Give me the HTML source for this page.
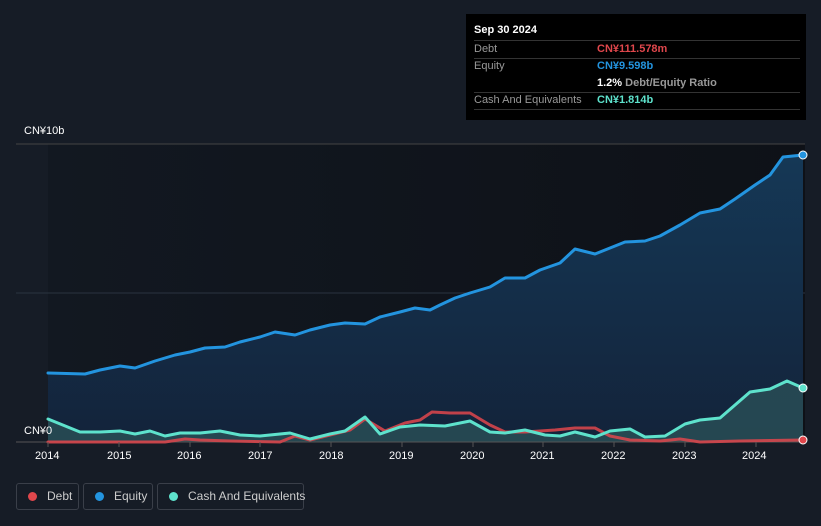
<!DOCTYPE html><html style="height:526px;overflow:hidden"><head><style>
body{margin:0;width:821px;height:526px;background:#161c26;font-family:"Liberation Sans",sans-serif;overflow:hidden;position:relative}
.t{position:absolute;color:#fff;font-size:11px}
.tip{position:absolute;left:466px;top:14px;width:340px;height:106px;background:#000;font-size:11px}
.row{position:absolute;left:8px;width:326px;height:17px;border-bottom:1px solid #333;color:#999}
.row span{position:absolute;left:123px}
.leg{position:absolute;top:483px;height:27px;border:1px solid #3a3f49;border-radius:3px;color:#ccc;font-size:12px;line-height:25px;box-sizing:border-box;white-space:nowrap}
.leg i{display:inline-block;width:9px;height:9px;border-radius:50%;margin:0 10px 0 11px;vertical-align:-1px}
</style></head><body>
<svg width="821" height="526" style="position:absolute;left:0;top:0">
<defs><linearGradient id="g" x1="0" y1="0" x2="0" y2="1"><stop offset="0" stop-color="#153856"/><stop offset="1" stop-color="#13233a"/></linearGradient>
<linearGradient id="bg" x1="0" y1="0" x2="1" y2="0"><stop offset="0" stop-color="#121821"/><stop offset="1" stop-color="#0e1117"/></linearGradient></defs>
<rect x="48" y="144" width="757" height="298" fill="url(#bg)"/>
<line x1="16" y1="144" x2="805" y2="144" stroke="#444"/>
<line x1="16" y1="293" x2="805" y2="293" stroke="#2a3340"/>
<path d="M48,373 L85,374 100,370 120,366 135,368 155,361 175,355 190,352 205,348 225,347 240,342 260,337 275,332 295,335 310,330 330,325 345,323 365,324 380,317 400,312 415,308 430,310 440,305 455,298 470,293 490,287 505,278 525,278 540,270 560,263 575,249 595,254 610,248 625,242 645,241 660,236 680,225 700,213 720,209 735,199 755,185 770,175 783,157 803,155 L803,442 48,442Z" fill="url(#g)"/>
<path d="M48,419 L80,432 100,432 120,431 135,434 150,431 165,436 180,433 200,433 220,431 240,435 260,436 290,433 310,439 330,434 345,431 365,417 380,434 400,427 420,425 445,426 470,421 490,432 505,433 525,430 545,435 560,436 575,432 595,437 610,431 630,429 645,437 665,436 685,424 700,420 720,418 735,405 750,392 770,389 787,381 803,388 L803,442 48,442Z" fill="#2a5058" opacity="0.8"/>
<line x1="16" y1="442" x2="805" y2="442" stroke="#555"/>
<g stroke-linejoin="round" stroke-linecap="round" fill="none" stroke-width="3">
<path d="M48,373 L85,374 100,370 120,366 135,368 155,361 175,355 190,352 205,348 225,347 240,342 260,337 275,332 295,335 310,330 330,325 345,323 365,324 380,317 400,312 415,308 430,310 440,305 455,298 470,293 490,287 505,278 525,278 540,270 560,263 575,249 595,254 610,248 625,242 645,241 660,236 680,225 700,213 720,209 735,199 755,185 770,175 783,157 803,155" stroke="#2394df"/>
<path d="M48,442 L165,442 185,439 200,440 230,441 280,442 295,436 310,440 330,435 350,430 365,419 385,431 405,423 420,420 432,412 450,413 470,413 490,425 505,432 525,432 555,430 575,428 595,428 610,436 630,440 660,441 680,439 700,442 740,441 803,440" stroke="#e0474c" opacity="0.85"/>
<path d="M48,419 L80,432 100,432 120,431 135,434 150,431 165,436 180,433 200,433 220,431 240,435 260,436 290,433 310,439 330,434 345,431 365,417 380,434 400,427 420,425 445,426 470,421 490,432 505,433 525,430 545,435 560,436 575,432 595,437 610,431 630,429 645,437 665,436 685,424 700,420 720,418 735,405 750,392 770,389 787,381 803,388" stroke="#5ee2cc"/>
</g>
<circle cx="803" cy="155" r="4" fill="#2394df" stroke="#fff"/>
<circle cx="803" cy="388" r="4" fill="#5ee2cc" stroke="#fff"/>
<circle cx="803" cy="440" r="4" fill="#e0474c" stroke="#fff"/>
<g stroke="#555"><line x1="48" y1="442" x2="48" y2="447"/><line x1="119" y1="442" x2="119" y2="447"/><line x1="190" y1="442" x2="190" y2="447"/><line x1="260" y1="442" x2="260" y2="447"/><line x1="331" y1="442" x2="331" y2="447"/><line x1="402" y1="442" x2="402" y2="447"/><line x1="473" y1="442" x2="473" y2="447"/><line x1="543" y1="442" x2="543" y2="447"/><line x1="614" y1="442" x2="614" y2="447"/><line x1="685" y1="442" x2="685" y2="447"/><line x1="756" y1="442" x2="756" y2="447"/></g>
</svg>
<div class="t" style="left:24px;top:125px">CN¥10b</div>
<div class="t" style="left:24px;top:425px">CN¥0</div>
<div class="t" style="left:35px;top:450px">2014</div><div class="t" style="left:107px;top:450px">2015</div><div class="t" style="left:177px;top:450px">2016</div><div class="t" style="left:248px;top:450px">2017</div><div class="t" style="left:319px;top:450px">2018</div><div class="t" style="left:389px;top:450px">2019</div><div class="t" style="left:460px;top:450px">2020</div><div class="t" style="left:530px;top:450px">2021</div><div class="t" style="left:601px;top:450px">2022</div><div class="t" style="left:672px;top:450px">2023</div><div class="t" style="left:742px;top:450px">2024</div>
<div class="tip">
<div style="position:absolute;left:8px;top:10px;color:#fff;font-weight:bold">Sep 30 2024</div>
<div style="position:absolute;left:8px;top:26px;width:326px;border-top:1px solid #333"></div>
<div class="row" style="top:27px;line-height:17px">Debt<span style="color:#e0474c;font-weight:bold">CN¥111.578m</span></div>
<div class="row" style="top:44px;line-height:17px;border:0">Equity<span style="color:#2394df;font-weight:bold">CN¥9.598b</span></div>
<div class="row" style="top:61px;line-height:17px">&nbsp;<span style="color:#fff;font-weight:bold">1.2% <b style="color:#999">Debt/Equity Ratio</b></span></div>
<div class="row" style="top:78px;line-height:17px">Cash And Equivalents<span style="color:#5ee2cc;font-weight:bold">CN¥1.814b</span></div>
</div>
<div class="leg" style="left:16px;width:63px"><i style="background:#e0474c"></i>Debt</div>
<div class="leg" style="left:83px;width:70px"><i style="background:#2394df"></i>Equity</div>
<div class="leg" style="left:157px;width:147px"><i style="background:#5ee2cc"></i>Cash And Equivalents</div>
</body></html>
